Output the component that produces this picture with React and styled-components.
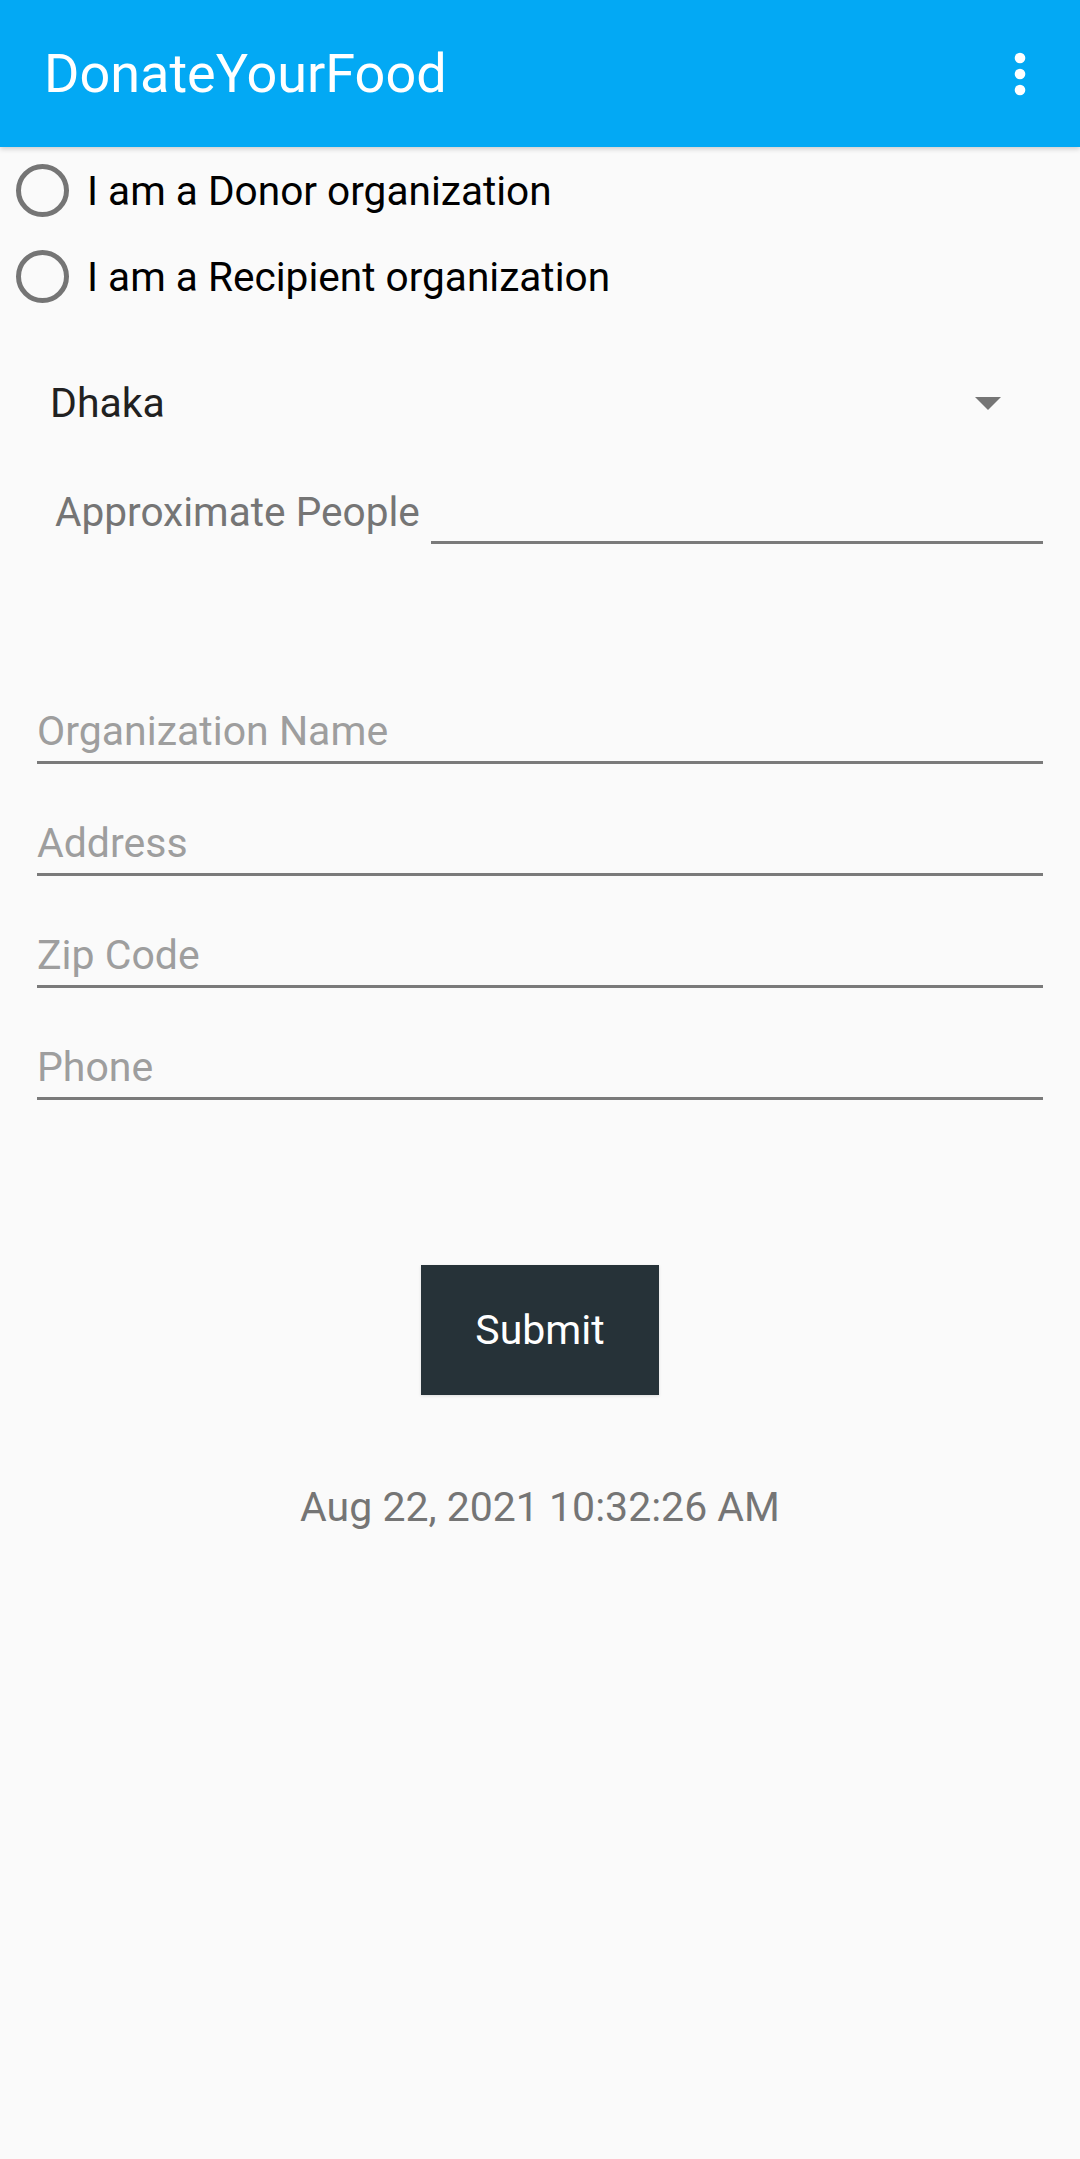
import React from 'react';
import styled, { createGlobalStyle } from 'styled-components';

const GlobalStyle = createGlobalStyle`
  html, body {
    margin: 0;
    padding: 0;
    background: #fafafa;
  }

  body {
    font-family: Roboto, 'Liberation Sans', sans-serif;
  }

  * {
    box-sizing: border-box;
  }
`;

const StyledPage = styled.div`
  min-height: 2159px;
  background: #fafafa;
`;

const StyledAppBar = styled.header`
  height: 147px;
  padding: 0 28px 0 44px;
  display: flex;
  align-items: center;
  justify-content: space-between;
  background: #03a9f4;
  box-shadow: 0 2px 5px rgba(0, 0, 0, 0.18);
  position: relative;
  z-index: 1;
`;

const StyledTitle = styled.h1`
  margin: 0;
  font-size: 54px;
  font-weight: 400;
  line-height: 148px;
  color: #ffffff;
`;

const StyledMenuIcon = styled.svg`
  width: 64px;
  height: 64px;
  fill: #ffffff;
`;

const StyledRadioGroup = styled.div`
  display: flex;
  flex-direction: column;
  padding-left: 16px;
`;

const StyledRadioRow = styled.label`
  height: 86px;
  display: flex;
  align-items: center;
  gap: 18px;
  font-size: 40.6px;
  line-height: 58px;
  padding-top: 2px;
  color: #000000;
`;

const StyledRadioCircle = styled.span`
  width: 53px;
  height: 53px;
  margin-top: -2px;
  border: 5px solid #757575;
  border-radius: 50%;
`;

const StyledSpinner = styled.div`
  margin-top: 34px;
  height: 100px;
  padding: 0 79px 0 50px;
  display: flex;
  align-items: center;
  justify-content: space-between;
  font-size: 41px;
  color: #212121;
`;

const StyledArrow = styled.span`
  width: 0;
  height: 0;
  border-left: 13px solid transparent;
  border-right: 13px solid transparent;
  border-top: 13px solid #757575;
`;

const StyledPeopleRow = styled.div`
  height: 91px;
  padding: 0 37px 0 55px;
  display: flex;
  align-items: flex-end;
`;

const StyledPeopleLabel = styled.span`
  margin-bottom: 4px;
  font-size: 40.6px;
  line-height: 56px;
  color: #757575;
`;

const StyledPeopleInput = styled.div`
  flex: 1;
  margin-left: 11px;
  height: 10px;
  border-bottom: 3px solid #7a7a7a;
`;

const StyledFields = styled.div`
  margin-top: 159px;
  padding: 0 37px;
  display: flex;
  flex-direction: column;
  gap: 51px;
`;

const StyledField = styled.div`
  padding-bottom: 1px;
  border-bottom: 3px solid #7a7a7a;
  font-size: 41px;
  line-height: 57px;
  color: #9e9e9e;
`;

const StyledActions = styled.div`
  margin-top: 165px;
  display: flex;
  flex-direction: column;
  align-items: center;
`;

const StyledButton = styled.button`
  width: 238px;
  height: 130px;
  border: none;
  border-radius: 0;
  background: #263238;
  color: #ffffff;
  font-family: inherit;
  font-size: 41px;
  font-weight: 400;
  box-shadow: 0 1px 3px rgba(0, 0, 0, 0.12);
`;

const StyledDate = styled.p`
  margin: 84px 0 0;
  font-size: 41px;
  line-height: 56px;
  color: #757575;
`;

const fields = ['Organization Name', 'Address', 'Zip Code', 'Phone'];

const App = () => (
  <StyledPage>
    <GlobalStyle />
    <StyledAppBar>
      <StyledTitle>DonateYourFood</StyledTitle>
      <StyledMenuIcon viewBox="0 0 64 64">
        <circle cx="32" cy="16" r="5.3" />
        <circle cx="32" cy="32" r="5.3" />
        <circle cx="32" cy="48" r="5.3" />
      </StyledMenuIcon>
    </StyledAppBar>
    <StyledRadioGroup>
      <StyledRadioRow>
        <StyledRadioCircle />
        I am a Donor organization
      </StyledRadioRow>
      <StyledRadioRow>
        <StyledRadioCircle />
        I am a Recipient organization
      </StyledRadioRow>
    </StyledRadioGroup>
    <StyledSpinner>
      Dhaka
      <StyledArrow />
    </StyledSpinner>
    <StyledPeopleRow>
      <StyledPeopleLabel>Approximate People</StyledPeopleLabel>
      <StyledPeopleInput />
    </StyledPeopleRow>
    <StyledFields>
      {fields.map((field) => (
        <StyledField key={field}>{field}</StyledField>
      ))}
    </StyledFields>
    <StyledActions>
      <StyledButton>Submit</StyledButton>
      <StyledDate>Aug 22, 2021 10:32:26 AM</StyledDate>
    </StyledActions>
  </StyledPage>
);

export default App;
